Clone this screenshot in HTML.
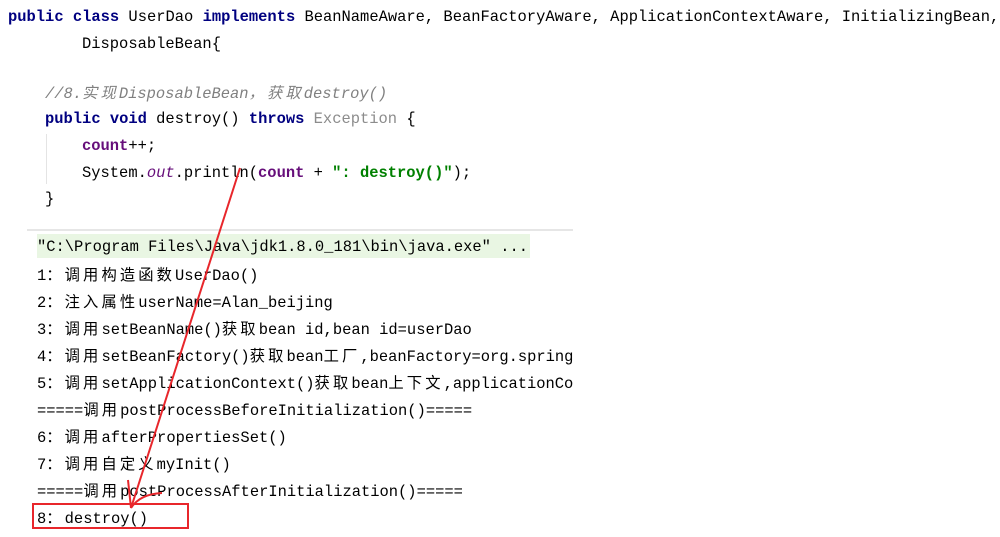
<!DOCTYPE html>
<html><head><meta charset="utf-8"><style>
body{margin:0;width:1000px;height:537px;background:#fff;overflow:hidden;position:relative;font-family:"Liberation Mono","Noto Sans CJK SC",monospace;font-size:15.45px;color:#000}
.l{position:absolute;white-space:pre;line-height:20px}
.k{color:#000080;font-weight:bold}
.c{color:#808080;font-style:italic}
.g{color:#8c8c8c}
.p{color:#660e7a;font-weight:bold}
.o{color:#660e7a;font-style:italic}
.s{color:#008000;font-weight:bold}
.cj{font-family:"Noto Sans CJK SC","Liberation Mono",monospace;font-size:15.3px;letter-spacing:3.1px}
</style></head><body>
<div class="l" style="left:8px;top:7px"><span class="k">public class</span> UserDao <span class="k">implements</span> BeanNameAware, BeanFactoryAware, ApplicationContextAware, InitializingBean,</div>
<div class="l" style="left:82px;top:34px">DisposableBean{</div>
<div class="l c" style="left:45px;top:82px">//8.<span class="cj">实现</span>DisposableBean<span class="cj">，获取</span>destroy()</div>
<div class="l" style="left:45px;top:109px"><span class="k">public void</span> destroy() <span class="k">throws</span> <span class="g">Exception</span> {</div>
<div class="l" style="left:82px;top:136px"><span class="p">count</span>++;</div>
<div class="l" style="left:82px;top:163px">System.<span class="o">out</span>.println(<span class="p">count</span> + <span class="s">": destroy()"</span>);</div>
<div class="l" style="left:45px;top:189px">}</div>
<div style="position:absolute;left:46px;top:134px;width:1px;height:50px;background:#e4e4e4"></div>
<div style="position:absolute;left:27px;top:229px;width:546px;height:2px;background:#e6e6e6"></div>
<div style="position:absolute;left:37px;top:234px;width:493px;height:24px;background:#e9f6e3"></div>
<div class="l" style="left:37px;top:237px">"C:\Program Files\Java\jdk1.8.0_181\bin\java.exe" ...</div>
<div class="l" style="left:37px;top:264px">1<span class="cj">：调用构造函数</span>UserDao()</div>
<div class="l" style="left:37px;top:291px">2<span class="cj">：注入属性</span>userName=Alan_beijing</div>
<div class="l" style="left:37px;top:318px">3<span class="cj">：调用</span>setBeanName()<span class="cj">获取</span>bean id,bean id=userDao</div>
<div class="l" style="left:37px;top:345px">4<span class="cj">：调用</span>setBeanFactory()<span class="cj">获取</span>bean<span class="cj">工厂</span>,beanFactory=org.spring</div>
<div class="l" style="left:37px;top:372px">5<span class="cj">：调用</span>setApplicationContext()<span class="cj">获取</span>bean<span class="cj">上下文</span>,applicationCo</div>
<div class="l" style="left:37px;top:399px">=====<span class="cj">调用</span>postProcessBeforeInitialization()=====</div>
<div class="l" style="left:37px;top:426px">6<span class="cj">：调用</span>afterPropertiesSet()</div>
<div class="l" style="left:37px;top:453px">7<span class="cj">：调用自定义</span>myInit()</div>
<div class="l" style="left:37px;top:480px">=====<span class="cj">调用</span>postProcessAfterInitialization()=====</div>
<div class="l" style="left:37px;top:507px">8<span class="cj">：</span>destroy()</div>
<div style="position:absolute;left:32px;top:503px;width:153px;height:22px;border:2px solid #e8262b"></div>
<svg style="position:absolute;left:0;top:0" width="1000" height="537">
<path d="M240 168 L131 508" stroke="#e8262b" stroke-width="2" fill="none"/>
<path d="M128 480 L131 508" stroke="#e8262b" stroke-width="2" fill="none"/>
<path d="M131 508 Q140 494 162 493" stroke="#e8262b" stroke-width="2" fill="none"/>
</svg>
</body></html>
